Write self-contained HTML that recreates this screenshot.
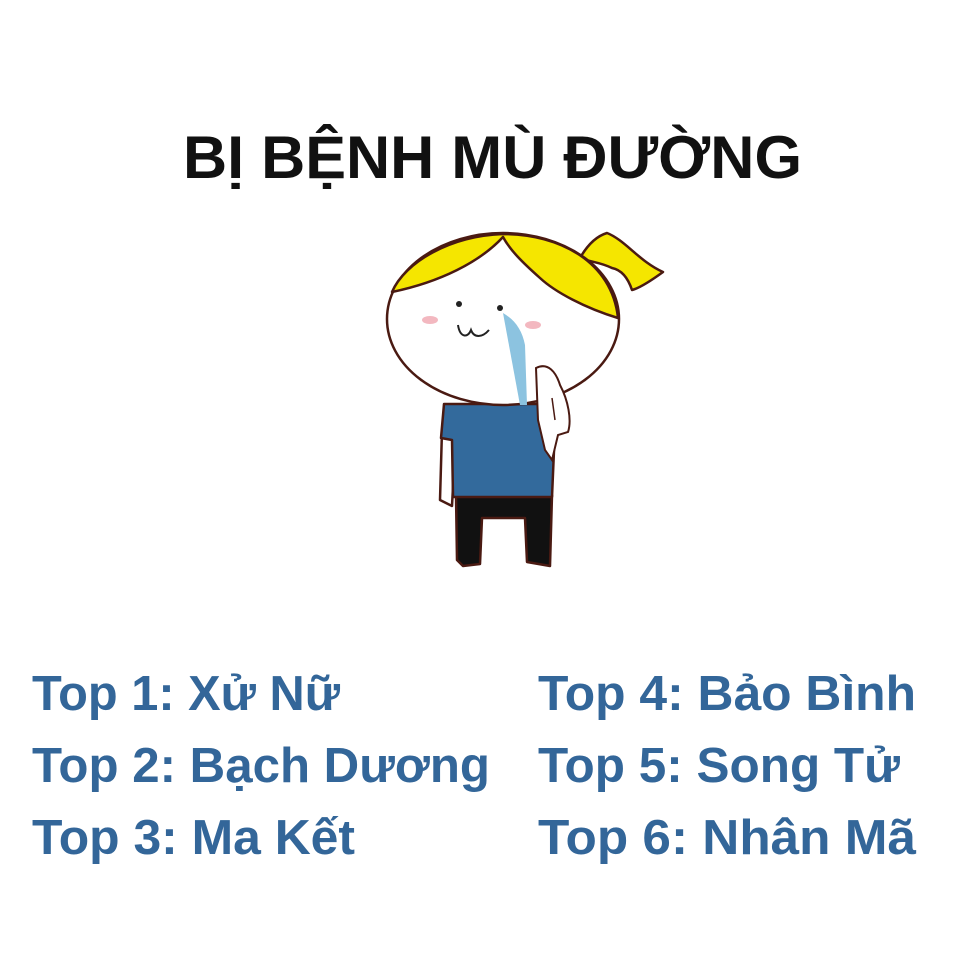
<!DOCTYPE html>
<html><head><meta charset="utf-8"><style>
html,body{margin:0;padding:0;background:#fff;width:960px;height:960px;overflow:hidden}
svg{display:block}
.t{font-family:"Liberation Sans","DejaVu Sans",sans-serif;font-weight:bold}
</style></head><body>
<svg width="960" height="960" viewBox="0 0 960 960" xmlns="http://www.w3.org/2000/svg">
<rect width="960" height="960" fill="#fff"/>
<text class="t" x="183" y="178" font-size="60" fill="#111" textLength="619" lengthAdjust="spacingAndGlyphs">BỊ BỆNH MÙ ĐƯỜNG</text>

<g stroke="#4a1a12" stroke-width="2.5" stroke-linejoin="round" stroke-linecap="round">
  <!-- legs -->
  <path d="M456 495 L457 560 L463 566 L480 564 L482 518 L525 518 L527 562 L550 566 L552 495 Z" fill="#111"/>
  <!-- left arm -->
  <path d="M442 430 L440 500 L452 506 L456 430 Z" fill="#fff"/>
  <!-- shirt -->
  <path d="M444 404 L556 404 L552 497 L453 497 L452 440 L441 438 Z" fill="#336a9c"/>
  <!-- ponytail -->
  <path d="M580 258 C588 244 597 236 607 233 C625 240 640 262 663 272 C652 280 640 288 632 290 C628 278 622 270 612 268 C600 262 590 262 580 258 Z" fill="#f5e600"/>
  <!-- head -->
  <ellipse cx="503" cy="319" rx="116" ry="86" fill="#fff"/>
  <!-- hair -->
  <path d="M392 292 C405 262 450 236 503 234 C560 234 612 262 618 318 C585 308 555 292 540 278 C522 262 510 250 503 237 C480 262 440 282 392 292 Z" fill="#f5e600"/>
</g>
<circle cx="459" cy="304" r="3" fill="#222"/>
<circle cx="500" cy="308" r="3" fill="#222"/>
<ellipse cx="430" cy="320" rx="8" ry="4" fill="#f3b8c0"/>
<ellipse cx="533" cy="325" rx="8" ry="4" fill="#f3b8c0"/>
<path d="M458 325 C460 338 468 338 471 330 C474 338 482 338 489 330" fill="none" stroke="#222" stroke-width="2"/>
<path d="M503 313 C515 320 522 330 525 345 L527 405 L520 405 Z" fill="#8cc3e0"/>
<path d="M536 368 C548 362 556 372 560 385 C568 400 572 420 568 432 L558 435 L552 460 L545 450 L538 420 Z" fill="#fff" stroke="#4a1a12" stroke-width="2"/>
<path d="M552 398 L555 420" stroke="#4a1a12" stroke-width="1.5"/>

<g class="t" font-size="49" fill="#336699">
<text x="32" y="710" textLength="308" lengthAdjust="spacingAndGlyphs">Top 1: Xử Nữ</text>
<text x="32" y="782" textLength="458" lengthAdjust="spacingAndGlyphs">Top 2: Bạch Dương</text>
<text x="32" y="854" textLength="323" lengthAdjust="spacingAndGlyphs">Top 3: Ma Kết</text>
<text x="538" y="710" textLength="378" lengthAdjust="spacingAndGlyphs">Top 4: Bảo Bình</text>
<text x="538" y="782" textLength="362" lengthAdjust="spacingAndGlyphs">Top 5: Song Tử</text>
<text x="538" y="854" textLength="378" lengthAdjust="spacingAndGlyphs">Top 6: Nhân Mã</text>
</g>
</svg>
</body></html>
